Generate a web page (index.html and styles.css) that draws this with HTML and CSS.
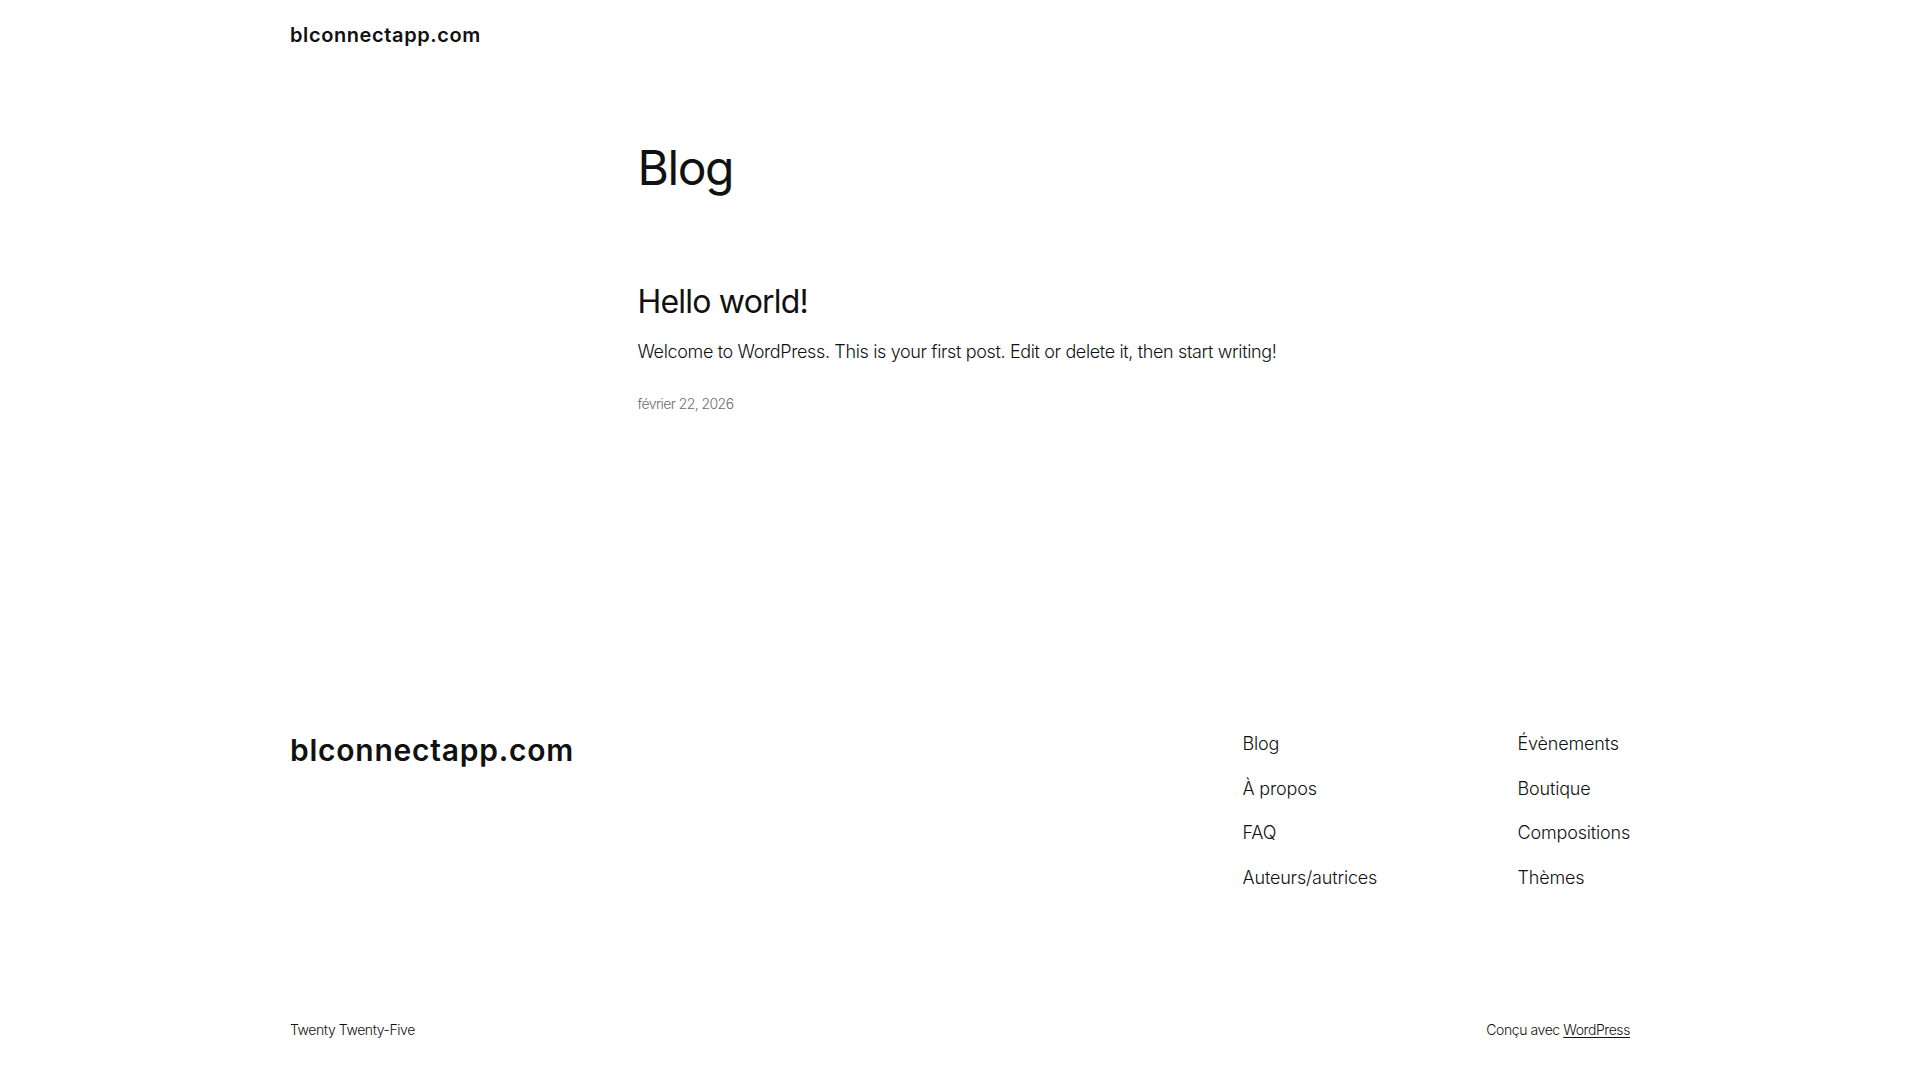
FILE: index.html
```html
<!DOCTYPE html>
<html lang="fr">
<head>
<meta charset="utf-8">
<title>Blog – blconnectapp.com</title>
<link rel="stylesheet" href="styles.css">
</head>
<body>
<div class="page">
  <header class="site-header">
    <div class="wide">
      <a class="site-title" href="#">blconnectapp.com</a>
    </div>
  </header>

  <main class="site-main">
    <div class="content">
      <h1 class="page-title">Blog</h1>
      <article class="post">
        <h2 class="post-title"><a href="#">Hello world!</a></h2>
        <p class="excerpt">Welcome to WordPress. This is your first post. Edit or delete it, then start writing!</p>
        <div class="post-date">février 22, 2026</div>
      </article>
    </div>
  </main>

  <footer class="site-footer">
    <div class="wide">
      <div class="footer-top">
        <a class="footer-title" href="#">blconnectapp.com</a>
        <div class="footer-navs">
          <ul class="nav-col">
            <li><a href="#">Blog</a></li>
            <li><a href="#">À propos</a></li>
            <li><a href="#">FAQ</a></li>
            <li><a href="#">Auteurs/autrices</a></li>
          </ul>
          <ul class="nav-col">
            <li><a href="#">Évènements</a></li>
            <li><a href="#">Boutique</a></li>
            <li><a href="#">Compositions</a></li>
            <li><a href="#">Thèmes</a></li>
          </ul>
        </div>
      </div>
      <div class="footer-bottom">
        <span>Twenty Twenty-Five</span>
        <span>Conçu avec <a class="wp-link" href="#">WordPress</a></span>
      </div>
    </div>
  </footer>
</div>
</body>
</html>
```

FILE: styles.css
```css
* { box-sizing: border-box; }

html, body {
  margin: 0;
  padding: 0;
  background: #ffffff;
}

body {
  font-family: Inter, "Noto Sans", "Liberation Sans", sans-serif;
  font-weight: 300;
  color: #111111;
  letter-spacing: -0.02em;
}

a {
  color: inherit;
  text-decoration: none;
}

.page {
  min-height: 1080px;
  display: flex;
  flex-direction: column;
}

.wide {
  width: 1340px;
  margin: 0 auto;
}

.content {
  width: 645px;
  margin: 0 auto;
}

/* Header */
.site-header {
  padding: 21px 0 19px;
}

.site-title {
  display: block;
  font-size: 20px;
  line-height: 28px;
  font-weight: 600;
  letter-spacing: 0.03em;
}

/* Main */
.site-main {
  padding-top: 73px;
}

.page-title {
  margin: 0;
  font-size: 48px;
  line-height: 54px;
  font-weight: 400;
  letter-spacing: -0.03em;
}

.post {
  margin-top: 88px;
  display: flex;
  flex-direction: column;
}

.post-title {
  margin: 0;
  font-size: 32px;
  line-height: 38px;
  font-weight: 400;
  letter-spacing: -0.025em;
}

.excerpt {
  margin: 18px 0 0;
  font-size: 18px;
  line-height: 25px;
  letter-spacing: -0.02em;
}

.post-date {
  margin-top: 30px;
  font-size: 14px;
  line-height: 20px;
  color: #6d6d6d;
  letter-spacing: -0.04em;
}

/* Footer */
.site-footer {
  padding-top: 318px;
}

.footer-top {
  display: flex;
  justify-content: space-between;
  align-items: flex-start;
}

.footer-title {
  font-size: 30px;
  line-height: 36px;
  font-weight: 600;
  letter-spacing: 0.025em;
}

.footer-navs {
  display: flex;
  gap: 139px;
  margin-top: -1px;
}

.nav-col {
  list-style: none;
  margin: 0;
  padding: 0;
  display: flex;
  flex-direction: column;
  gap: 19.6px;
  font-size: 18px;
  line-height: 25px;
  letter-spacing: -0.01em;
}

.nav-col:first-child {
  width: 136px;
}

.footer-bottom {
  margin-top: 130px;
  padding-bottom: 41px;
  display: flex;
  justify-content: space-between;
  font-size: 14px;
  line-height: 20px;
  letter-spacing: -0.03em;
}

.wp-link {
  text-decoration: underline;
  text-underline-offset: 2px;
  text-decoration-thickness: 1px;
}
```
